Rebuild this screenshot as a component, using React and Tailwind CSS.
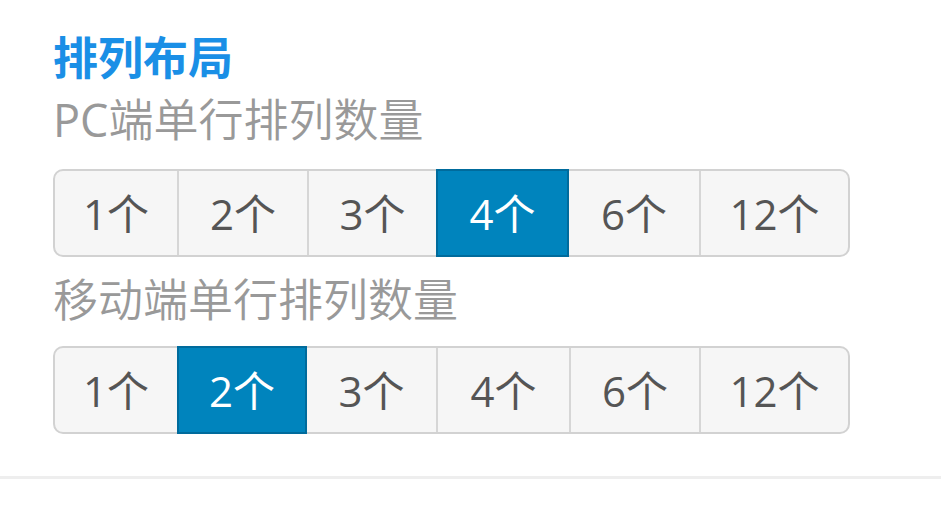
import React, { useState } from "react";

const OPTIONS = [
  { n: 1, w: "w-[122px]" },
  { n: 2, w: "w-[130px]" },
  { n: 3, w: "w-[129px]" },
  { n: 4, w: "w-[133px]" },
  { n: 6, w: "w-[130px]" },
  { n: 12, w: "w-[149px]" },
];

// Segmented button group for picking how many items go in one row
const CountPicker = ({ value, onChange }) => (
  <div className="flex h-[88px] w-fit rounded-[10px] border-2 border-[#d2d2d2] bg-[#f6f6f6]">
    {OPTIONS.map(({ n, w }, i) => {
      const active = n === value;
      const prevActive = i > 0 && OPTIONS[i - 1].n === value;
      return (
        <button
          key={n}
          onClick={() => onChange(n)}
          className={
            "flex shrink-0 items-center justify-center pt-[2px] text-[42px] font-normal leading-none " +
            w +
            " " +
            (i === 0 ? "rounded-l-[8px] " : "") +
            (i === OPTIONS.length - 1 ? "rounded-r-[8px] " : "") +
            (i > 0 && !active && !prevActive ? "border-l-2 border-[#d6d6d6] " : "") +
            (active
              ? "-my-[2px] border-2 border-[#006b9c] bg-[#0084bd] text-white"
              : "text-[#555555]")
          }
        >
          {n}个
        </button>
      );
    })}
  </div>
);

export default function App() {
  const [pc, setPc] = useState(4);
  const [mobile, setMobile] = useState(2);

  return (
    <div
      className="min-h-[510px] w-[941px] bg-white"
      style={{ fontFamily: '"Open Sans", "Noto Sans CJK SC", sans-serif' }}
    >
      <div className="pl-[53px] pt-[27px]">
        <h2 className="text-[45px] font-bold leading-[62px] text-[#1a8fe6]">排列布局</h2>
        <p className="text-[45px] font-[350] leading-[62px] text-[#999999]">
          <span className="font-normal">PC</span>端单行排列数量
        </p>
        <div className="mt-[18px]">
          <CountPicker value={pc} onChange={setPc} />
        </div>
        <p className="mt-[12px] text-[45px] font-[350] leading-[62px] text-[#999999]">
          移动端单行排列数量
        </p>
        <div className="mt-[15px]">
          <CountPicker value={mobile} onChange={setMobile} />
        </div>
      </div>
      <div className="mt-[42px] h-[3px] bg-[#eeeeee]" />
    </div>
  );
}
